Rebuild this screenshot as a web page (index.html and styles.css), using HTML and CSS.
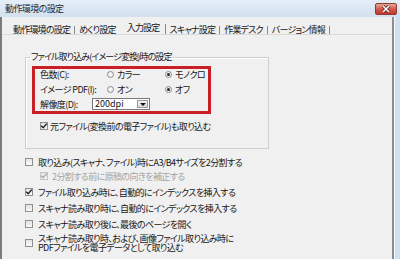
FILE: index.html
```html
<!DOCTYPE html>
<html>
<head>
<meta charset="utf-8">
<link rel="stylesheet" href="styles.css">
<title>動作環境の設定</title>
</head>
<body>
	<div class="titlebar">
		<span class="title">動作環境の設定</span>
		<span class="close">
			<svg width="10" height="8" viewBox="0 0 10 8"><path d="M2 1 L8 7 M8 1 L2 7" stroke="#5a1c18" stroke-width="3"/><path d="M2 1 L8 7 M8 1 L2 7" stroke="#fff" stroke-width="1.6"/></svg>
		</span>
	</div>
	<div class="frame">
		<div class="tabs">
			<span class="tab">動作環境の設定</span>
			<span class="tab plain">めくり設定</span>
			<span class="tab active">入力設定</span>
			<span class="tab">スキャナ設定</span>
			<span class="tab">作業デスク</span>
			<span class="tab">バージョン情報</span>
		</div>
		<div class="panel">
			<fieldset class="group">
				<legend>ファイル取り込み(イメージ変換)時の設定</legend>
				<div class="highlight">
					<div class="hrow">
						<span class="lbl">色数(C):</span>
						<span class="choice first"><span class="radio"></span>カラー</span>
						<span class="choice"><span class="radio on"></span>モノクロ</span>
					</div>
					<div class="hrow">
						<span class="lbl">イメージ PDF(I):</span>
						<span class="choice first"><span class="radio"></span>オン</span>
						<span class="choice"><span class="radio on"></span>オフ</span>
					</div>
					<div class="hrow res">
						<span class="lbl">解像度(D):</span>
						<span class="select"><span class="val">200dpi</span><span class="drop"><i></i></span></span>
					</div>
				</div>
				<div class="opt inner">
					<span class="box"><svg width="8" height="8" viewBox="0 0 8 8"><path d="M1.2 3.8 L3.2 5.8 L6.8 1.6" stroke="#1e1e1e" stroke-width="1.4" fill="none"/></svg></span>
					<span>元ファイル(変換前の電子ファイル)も取り込む</span>
				</div>
			</fieldset>
			<div class="opts">
				<div class="opt">
					<span class="box"></span>
					<span>取り込み(スキャナ、ファイル)時にA3/B4サイズを2分割する</span>
				</div>
				<div class="opt sub dis">
					<span class="box"><svg width="8" height="8" viewBox="0 0 8 8"><path d="M1.2 3.8 L3.2 5.8 L6.8 1.6" stroke="#a8a8a8" stroke-width="1.4" fill="none"/></svg></span>
					<span>2分割する前に原稿の向きを補正する</span>
				</div>
				<div class="opt">
					<span class="box"><svg width="8" height="8" viewBox="0 0 8 8"><path d="M1.2 3.8 L3.2 5.8 L6.8 1.6" stroke="#1e1e1e" stroke-width="1.4" fill="none"/></svg></span>
					<span>ファイル取り込み時に、自動的にインデックスを挿入する</span>
				</div>
				<div class="opt">
					<span class="box"></span>
					<span>スキャナ読み取り時に、自動的にインデックスを挿入する</span>
				</div>
				<div class="opt">
					<span class="box"></span>
					<span>スキャナ読み取り後に、最後のページを開く</span>
				</div>
				<div class="opt multi">
					<span class="box"></span>
					<span class="lines">スキャナ読み取り時、および、画像ファイル取り込み時に<br>PDFファイルを電子データとして取り込む</span>
				</div>
			</div>
		</div>
	</div>
</body>
</html>
```

FILE: styles.css
```css
* {
  box-sizing: border-box;
}

body {
  margin: 0;
  width: 400px;
  height: 259px;
  overflow: hidden;
  background: #d2e1f1;
  font-family: "Noto Sans CJK JP", sans-serif;
  font-size: 9px;
  letter-spacing: -0.6px;
  color: #161616;
  font-feature-settings: "palt";
}

.titlebar {
  height: 17px;
  display: flex;
  align-items: center;
  padding: 0 3px 0 5px;
  background: linear-gradient(#e5eef8, #d3e0ef);
}

.title {
  line-height: 10px;
  color: #1b2733;
}

.close {
  margin-left: auto;
  width: 22px;
  height: 12px;
  display: flex;
  align-items: center;
  justify-content: center;
  border: 1px solid #8e3a33;
  border-radius: 2px;
  background: linear-gradient(#e9a99c, #d2594b 50%, #c2382b);
}

.frame {
  height: 242px;
  margin-right: 6px;
  background: #f0f0f0;
  border-left: 2px solid #7b7b7b;
  border-right: 2px solid #8d8d8d;
  box-shadow: 1px 0 0 #f7fafd;
  display: flex;
  flex-direction: column;
}

.tabs {
  height: 17px;
  display: flex;
  align-items: flex-end;
  padding-left: 7px;
  letter-spacing: -0.8px;
}

.tab {
  height: 8px;
  line-height: 8px;
  padding: 0 4px;
  border-right: 1px solid #8a8a8a;
  white-space: nowrap;
}

.tab.plain {
  border-right: none;
}

.tab.active {
  padding: 0 5px 2px 7px;
  height: 10px;
}

.panel {
  flex: 1;
  border-top: 1px solid #dadada;
  padding: 17px 0 0 23px;
}

.group {
  margin: 0;
  width: 244px;
  border: 1px solid #cfcfcf;
  box-shadow: inset 1px 1px 0 #fff;
  padding: 4px 0 17px 6px;
}

.group legend {
  padding: 0 1px;
  margin-left: -2px;
  line-height: 10px;
  letter-spacing: -0.9px;
}

.highlight {
  width: 179px;
  height: 48px;
  border: 3px solid #c91f26;
  padding-left: 5px;
  display: flex;
  flex-direction: column;
}

.hrow {
  height: 10px;
  display: flex;
  align-items: center;
  white-space: nowrap;
}

.hrow + .hrow {
  margin-top: 5px;
}

.hrow.res {
  height: 12px;
  margin-top: 4px;
}

.lbl {
  width: 52px;
  flex: none;
}

.choice {
  width: 58px;
  flex: none;
  display: flex;
  align-items: center;
  gap: 3px;
}

.choice.first {
  margin-left: 15px;
}

.radio {
  width: 7px;
  height: 7px;
  border: 1px solid #8c8c8c;
  border-radius: 50%;
  background: radial-gradient(#fff, #e2e2e2);
  display: flex;
  align-items: center;
  justify-content: center;
}

.radio.on::after {
  content: "";
  width: 3px;
  height: 3px;
  border-radius: 50%;
  background: #262626;
}

.select {
  width: 58px;
  height: 12px;
  display: flex;
  border: 1px solid #7a7a7a;
  background: #fff;
}

.select .val {
  flex: 1;
  padding-left: 2px;
  line-height: 10px;
  letter-spacing: 0;
}

.drop {
  width: 11px;
  margin: 1px;
  border: 1px solid #9a9a9a;
  background: linear-gradient(#f4f4f4, #d8d8d8);
  display: flex;
  align-items: center;
  justify-content: center;
}

.drop i {
  border-left: 3px solid transparent;
  border-right: 3px solid transparent;
  border-top: 3px solid #111;
}

.opt {
  height: 10px;
  display: flex;
  align-items: center;
  gap: 5px;
  white-space: nowrap;
}

.opt.inner {
  margin: 7px 0 0 8px;
  gap: 2px;
}

.box {
  width: 8px;
  height: 8px;
  flex: none;
  border: 1px solid #8e8f8f;
  background: linear-gradient(#e3e3e3, #fbfbfb);
  display: flex;
}

.box svg {
  margin: -1px;
}

.opts {
  margin-top: 8px;
  display: flex;
  flex-direction: column;
  gap: 6px;
}

.opt.sub {
  margin-top: -2px;
  padding-left: 15px;
  gap: 4px;
}

.opt.dis {
  color: #a3a3a3;
}

.opt.dis .box {
  border-color: #c4c4c4;
}

.opt.multi {
  height: 18px;
  margin-top: -1px;
}

.lines {
  line-height: 9px;
}
```
